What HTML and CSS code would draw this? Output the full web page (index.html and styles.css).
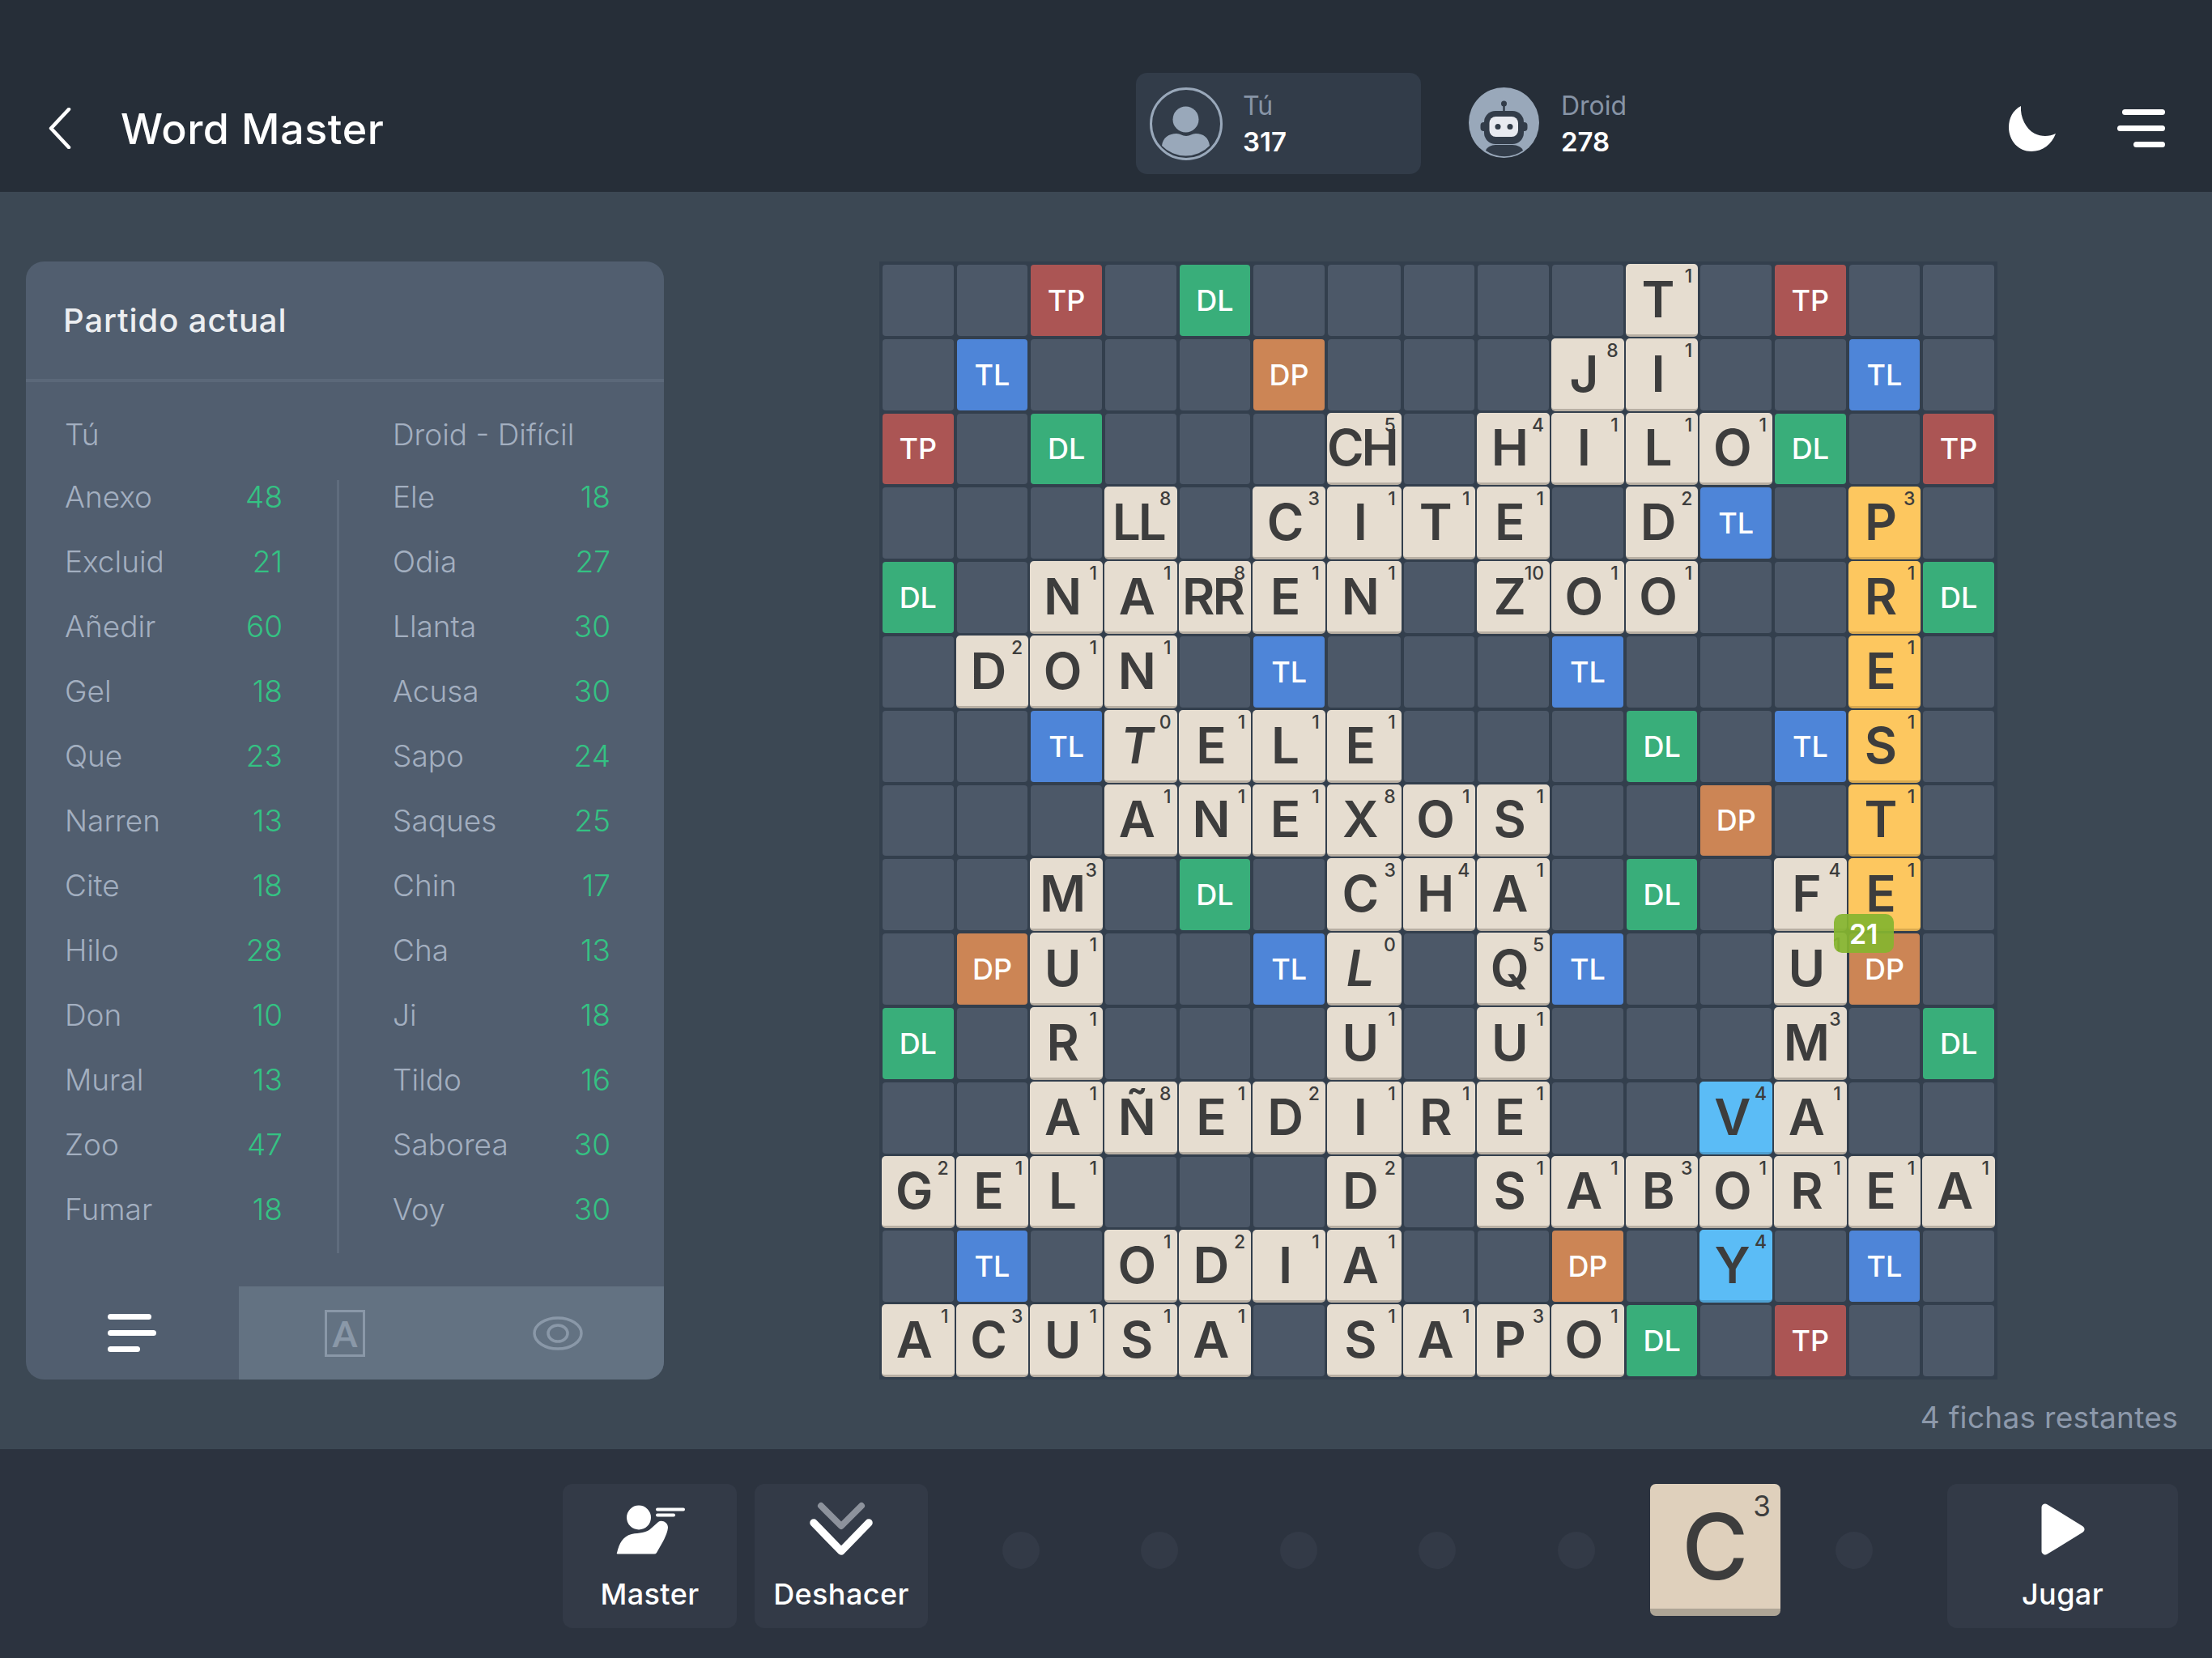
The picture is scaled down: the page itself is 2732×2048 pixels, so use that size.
FILE: index.html
```html
<!DOCTYPE html>
<html lang="es">
<head>
    <meta charset="UTF-8">
    <title>Word Master</title>
    <link rel="stylesheet" href="styles.css">
</head>
<body>
<header class="hdr">
    <svg class="back" width="28" height="51" viewBox="0 0 28 51"><path d="M25 2 L3 25.5 L25 49" fill="none" stroke="#fff" stroke-width="4.5" stroke-linecap="round" stroke-linejoin="round"/></svg>
    <h1 class="title">Word Master</h1>
    <div class="player active">
        <svg width="90" height="90" viewBox="0 0 90 90">
            <circle cx="45" cy="45" r="43.5" fill="none" stroke="#99a8ba" stroke-width="3"/>
            <circle cx="44.5" cy="39.5" r="16" fill="#99a8ba"/>
            <path d="M15 72 C16 62 24 57 33 57 C38 57 40 60 45 60 C50 60 52 57 57 57 C66 57 73 62 74 72 A41 41 0 0 1 15 72Z" fill="#99a8ba"/>
        </svg>
        <div class="who"><span class="name">Tú</span><span class="pts">317</span></div>
    </div>
    <div class="player droid">
        <svg width="87" height="90" viewBox="0 0 87 90">
            <circle cx="43.5" cy="43.5" r="43.5" fill="#99a8ba"/>
            <path d="M43.5 20 V30" stroke="#323c49" stroke-width="2.5"/>
            <circle cx="43.5" cy="20" r="3.5" fill="#323c49"/>
            <rect x="14.5" y="43" width="58" height="11" rx="4" fill="#323c49"/>
            <rect x="19" y="29" width="49" height="41" rx="14" fill="#323c49"/>
            <rect x="25.5" y="36" width="35.5" height="25" rx="8" fill="#e8eaf0"/>
            <circle cx="36" cy="48.5" r="3.5" fill="#323c49"/>
            <circle cx="51" cy="48.5" r="3.5" fill="#323c49"/>
            <path d="M21 78 C22 74 28 71 33 71 H54 C60 71 66 74 67 78 A40 40 0 0 1 21 78Z" fill="#323c49"/>
        </svg>
        <div class="who"><span class="name">Droid</span><span class="pts">278</span></div>
    </div>
    <svg class="moon" width="58" height="57" viewBox="0 0 58 57"><path d="M15 1 C5 6 0 16 0 27 C0 44 12 57 28 57 C42 57 53 48 58 35 C50 39 40 39 32 35 C21 29 14 15 15 1Z" fill="#fff"/></svg>
    <div class="menu"><i class="m1"></i><i class="m2"></i><i class="m3"></i></div>
</header>

<main class="main">
    <div class="top">
        <section class="panel">
            <h2 class="panel-title">Partido actual</h2>
            <div class="heads"><span class="head-l">Tú</span><span>Droid - Difícil</span></div>
            <div class="lists">
                <div class="col left">
                    <div class="row"><span>Anexo</span><em>48</em></div>
                    <div class="row"><span>Excluid</span><em>21</em></div>
                    <div class="row"><span>Añedir</span><em>60</em></div>
                    <div class="row"><span>Gel</span><em>18</em></div>
                    <div class="row"><span>Que</span><em>23</em></div>
                    <div class="row"><span>Narren</span><em>13</em></div>
                    <div class="row"><span>Cite</span><em>18</em></div>
                    <div class="row"><span>Hilo</span><em>28</em></div>
                    <div class="row"><span>Don</span><em>10</em></div>
                    <div class="row"><span>Mural</span><em>13</em></div>
                    <div class="row"><span>Zoo</span><em>47</em></div>
                    <div class="row"><span>Fumar</span><em>18</em></div>
                </div>
                <div class="col right">
                    <div class="row"><span>Ele</span><em>18</em></div>
                    <div class="row"><span>Odia</span><em>27</em></div>
                    <div class="row"><span>Llanta</span><em>30</em></div>
                    <div class="row"><span>Acusa</span><em>30</em></div>
                    <div class="row"><span>Sapo</span><em>24</em></div>
                    <div class="row"><span>Saques</span><em>25</em></div>
                    <div class="row"><span>Chin</span><em>17</em></div>
                    <div class="row"><span>Cha</span><em>13</em></div>
                    <div class="row"><span>Ji</span><em>18</em></div>
                    <div class="row"><span>Tildo</span><em>16</em></div>
                    <div class="row"><span>Saborea</span><em>30</em></div>
                    <div class="row"><span>Voy</span><em>30</em></div>
                </div>
            </div>
            <div class="tabs">
                <div class="tab on"><div class="bars"><i class="b1"></i><i class="b2"></i><i class="b3"></i></div></div>
                <div class="tab"><div class="letterbox">A</div></div>
                <div class="tab">
                    <svg width="62" height="42" viewBox="0 0 62 42"><ellipse cx="31" cy="21" rx="29" ry="19" fill="none" stroke="#8a98a8" stroke-width="3.5"/><ellipse cx="31" cy="21" rx="12" ry="10" fill="none" stroke="#8a98a8" stroke-width="3.5"/></svg>
                </div>
            </div>
        </section>

        <section class="board">
            <!-- 0 -->
            <div class="c"></div><div class="c"></div><div class="c tp">TP</div><div class="c"></div><div class="c dl">DL</div><div class="c"></div><div class="c"></div><div class="c"></div><div class="c"></div><div class="c"></div><div class="t">T<b>1</b></div><div class="c"></div><div class="c tp">TP</div><div class="c"></div><div class="c"></div>
            <!-- 1 -->
            <div class="c"></div><div class="c tl">TL</div><div class="c"></div><div class="c"></div><div class="c"></div><div class="c dp">DP</div><div class="c"></div><div class="c"></div><div class="c"></div><div class="t">J<b>8</b></div><div class="t">I<b>1</b></div><div class="c"></div><div class="c"></div><div class="c tl">TL</div><div class="c"></div>
            <!-- 2 -->
            <div class="c tp">TP</div><div class="c"></div><div class="c dl">DL</div><div class="c"></div><div class="c"></div><div class="c"></div><div class="t dg">CH<b>5</b></div><div class="c"></div><div class="t">H<b>4</b></div><div class="t">I<b>1</b></div><div class="t">L<b>1</b></div><div class="t">O<b>1</b></div><div class="c dl">DL</div><div class="c"></div><div class="c tp">TP</div>
            <!-- 3 -->
            <div class="c"></div><div class="c"></div><div class="c"></div><div class="t dg">LL<b>8</b></div><div class="c"></div><div class="t">C<b>3</b></div><div class="t">I<b>1</b></div><div class="t">T<b>1</b></div><div class="t">E<b>1</b></div><div class="c"></div><div class="t">D<b>2</b></div><div class="c tl">TL</div><div class="c"></div><div class="t y">P<b>3</b></div><div class="c"></div>
            <!-- 4 -->
            <div class="c dl">DL</div><div class="c"></div><div class="t">N<b>1</b></div><div class="t">A<b>1</b></div><div class="t dg">RR<b>8</b></div><div class="t">E<b>1</b></div><div class="t">N<b>1</b></div><div class="c"></div><div class="t">Z<b>10</b></div><div class="t">O<b>1</b></div><div class="t">O<b>1</b></div><div class="c"></div><div class="c"></div><div class="t y">R<b>1</b></div><div class="c dl">DL</div>
            <!-- 5 -->
            <div class="c"></div><div class="t">D<b>2</b></div><div class="t">O<b>1</b></div><div class="t">N<b>1</b></div><div class="c"></div><div class="c tl">TL</div><div class="c"></div><div class="c"></div><div class="c"></div><div class="c tl">TL</div><div class="c"></div><div class="c"></div><div class="c"></div><div class="t y">E<b>1</b></div><div class="c"></div>
            <!-- 6 -->
            <div class="c"></div><div class="c"></div><div class="c tl">TL</div><div class="t blank">T<b>0</b></div><div class="t">E<b>1</b></div><div class="t">L<b>1</b></div><div class="t">E<b>1</b></div><div class="c"></div><div class="c"></div><div class="c"></div><div class="c dl">DL</div><div class="c"></div><div class="c tl">TL</div><div class="t y">S<b>1</b></div><div class="c"></div>
            <!-- 7 -->
            <div class="c"></div><div class="c"></div><div class="c"></div><div class="t">A<b>1</b></div><div class="t">N<b>1</b></div><div class="t">E<b>1</b></div><div class="t">X<b>8</b></div><div class="t">O<b>1</b></div><div class="t">S<b>1</b></div><div class="c"></div><div class="c"></div><div class="c dp">DP</div><div class="c"></div><div class="t y">T<b>1</b></div><div class="c"></div>
            <!-- 8 -->
            <div class="c"></div><div class="c"></div><div class="t">M<b>3</b></div><div class="c"></div><div class="c dl">DL</div><div class="c"></div><div class="t">C<b>3</b></div><div class="t">H<b>4</b></div><div class="t">A<b>1</b></div><div class="c"></div><div class="c dl">DL</div><div class="c"></div><div class="t">F<b>4</b></div><div class="t y">E<b>1</b><span class="bubble">21</span></div><div class="c"></div>
            <!-- 9 -->
            <div class="c"></div><div class="c dp">DP</div><div class="t">U<b>1</b></div><div class="c"></div><div class="c"></div><div class="c tl">TL</div><div class="t blank">L<b>0</b></div><div class="c"></div><div class="t">Q<b>5</b></div><div class="c tl">TL</div><div class="c"></div><div class="c"></div><div class="t">U<b>1</b></div><div class="c dp">DP</div><div class="c"></div>
            <!-- 10 -->
            <div class="c dl">DL</div><div class="c"></div><div class="t">R<b>1</b></div><div class="c"></div><div class="c"></div><div class="c"></div><div class="t">U<b>1</b></div><div class="c"></div><div class="t">U<b>1</b></div><div class="c"></div><div class="c"></div><div class="c"></div><div class="t">M<b>3</b></div><div class="c"></div><div class="c dl">DL</div>
            <!-- 11 -->
            <div class="c"></div><div class="c"></div><div class="t">A<b>1</b></div><div class="t">Ñ<b>8</b></div><div class="t">E<b>1</b></div><div class="t">D<b>2</b></div><div class="t">I<b>1</b></div><div class="t">R<b>1</b></div><div class="t">E<b>1</b></div><div class="c"></div><div class="c"></div><div class="t sky">V<b>4</b></div><div class="t">A<b>1</b></div><div class="c"></div><div class="c"></div>
            <!-- 12 -->
            <div class="t">G<b>2</b></div><div class="t">E<b>1</b></div><div class="t">L<b>1</b></div><div class="c"></div><div class="c"></div><div class="c"></div><div class="t">D<b>2</b></div><div class="c"></div><div class="t">S<b>1</b></div><div class="t">A<b>1</b></div><div class="t">B<b>3</b></div><div class="t">O<b>1</b></div><div class="t">R<b>1</b></div><div class="t">E<b>1</b></div><div class="t">A<b>1</b></div>
            <!-- 13 -->
            <div class="c"></div><div class="c tl">TL</div><div class="c"></div><div class="t">O<b>1</b></div><div class="t">D<b>2</b></div><div class="t">I<b>1</b></div><div class="t">A<b>1</b></div><div class="c"></div><div class="c"></div><div class="c dp">DP</div><div class="c"></div><div class="t sky">Y<b>4</b></div><div class="c"></div><div class="c tl">TL</div><div class="c"></div>
            <!-- 14 -->
            <div class="t">A<b>1</b></div><div class="t">C<b>3</b></div><div class="t">U<b>1</b></div><div class="t">S<b>1</b></div><div class="t">A<b>1</b></div><div class="c"></div><div class="t">S<b>1</b></div><div class="t">A<b>1</b></div><div class="t">P<b>3</b></div><div class="t">O<b>1</b></div><div class="c dl">DL</div><div class="c"></div><div class="c tp">TP</div><div class="c"></div><div class="c"></div>
        </section>
    </div>
    <p class="left-count">4 fichas restantes</p>
</main>

<footer class="ftr">
    <button class="btn master" type="button">
        <span class="ico">
            <svg width="86" height="66" viewBox="0 0 86 66">
                <circle cx="29" cy="18.5" r="15" fill="#fff"/>
                <path d="M2 62 C5 50 9 42 20 39 C30 37 38 38 44 32 L53 24 C57 21 65 24 65 31 C64 40 58 50 51 62 Q50 63.5 48 63.5 H3 Q1 63.5 2 62Z" fill="#fff"/>
                <path d="M52 8.5 H84 M52 15.5 H72" stroke="#fff" stroke-width="4" stroke-linecap="round"/>
            </svg>
        </span>
        <span>Master</span>
    </button>
    <button class="btn undo" type="button">
        <span class="ico">
            <svg width="80" height="72" viewBox="0 0 80 72">
                <path d="M15 7 L40 32 L65 7" fill="none" stroke="#8d929c" stroke-width="8" stroke-linecap="round" stroke-linejoin="round"/>
                <path d="M6 28 L40 63 L74 28" fill="none" stroke="#fff" stroke-width="9.5" stroke-linecap="round" stroke-linejoin="round"/>
            </svg>
        </span>
        <span>Deshacer</span>
    </button>
    <div class="rack">
        <div class="slot"><i class="dot"></i></div>
        <div class="slot"><i class="dot"></i></div>
        <div class="slot"><i class="dot"></i></div>
        <div class="slot"><i class="dot"></i></div>
        <div class="slot"><i class="dot"></i></div>
        <div class="slot"><div class="rack-tile">C<b>3</b></div></div>
        <div class="slot"><i class="dot"></i></div>
    </div>
    <button class="btn play" type="button">
        <span class="ico">
            <svg width="56" height="66" viewBox="0 0 56 66"><path d="M6 6 L50 33 L6 60Z" fill="#fff" stroke="#fff" stroke-width="9" stroke-linejoin="round"/></svg>
        </span>
        <span>Jugar</span>
    </button>
</footer>
</body>
</html>
```

FILE: styles.css
```css
* { box-sizing: border-box; }
html, body { margin: 0; padding: 0; }
body { width: 2732px; height: 2048px; display: flex; flex-direction: column; font-family: "Inter", "Noto Sans", sans-serif; background: #3c4854; overflow: hidden; }

/* header */
.hdr { height: 237px; flex: none; background: #262e38; display: flex; align-items: flex-start; padding: 90px 58px 0 60px; }
.back { margin-top: 43px; flex: none; }
.title { width: 1315px; margin: 40px 0 0 0; padding-left: 61px; font-size: 52px; line-height: 60px; font-weight: 500; letter-spacing: .6px; color: #fff; }
.player { width: 352px; height: 125px; padding-left: 17px; display: flex; align-items: center; gap: 25px; border-radius: 14px; flex: none; }
.player.active { background: #323c49; }
.player.droid { margin-left: 42px; gap: 27px; }
.who { display: flex; flex-direction: column; }
.name { font-size: 32px; line-height: 44px; color: #8794a6; }
.pts { font-size: 33px; line-height: 44px; color: #fff; font-weight: 600; }
.moon { margin: 40px 0 0 auto; flex: none; }
.menu { width: 59px; margin: 45px 0 0 76px; display: flex; flex-direction: column; align-items: flex-end; gap: 13px; }
.menu i { display: block; height: 7px; background: #fff; border-radius: 4px; }
.m1 { width: 53px; }
.m2 { width: 59px; }
.m3 { width: 39px; }

/* main */
.main { flex: 1; padding: 86px 0 0 32px; position: relative; }
.top { display: flex; gap: 266px; }
.left-count { margin: 25px 42px 0 0; text-align: right; font-size: 37px; line-height: 44px; letter-spacing: .3px; color: #8d99ab; }

/* panel */
.panel { width: 788px; height: 1381px; background: #515e6f; border-radius: 22px; overflow: hidden; display: flex; flex-direction: column; }
.panel-title { height: 149px; margin: 0; padding: 49px 0 0 46px; font-size: 40px; line-height: 48px; font-weight: 500; letter-spacing: .9px; color: #eceef1; border-bottom: 4px solid #5b6879; }
.heads { display: flex; padding: 44px 0 0 48px; font-size: 37px; line-height: 42px; font-weight: 300; color: #a3afc0; }
.head-l { width: 405px; }
.lists { display: flex; margin: 35px 0 0 48px; }
.col { display: flex; flex-direction: column; gap: 38px; padding-bottom: 33px; }
.col.left { width: 269px; }
.col.right { width: 338px; margin-left: 67px; padding-left: 66px; border-left: 3px solid #5f6c7d; }
.row { height: 42px; display: flex; justify-content: space-between; font-size: 37px; line-height: 42px; font-weight: 300; color: #a3afc0; }
.row em { font-style: normal; color: #34c283; }
.tabs { margin-top: auto; height: 115px; display: flex; }
.tab { flex: 1; display: flex; align-items: center; justify-content: center; background: #637282; }
.tab.on { background: transparent; }
.bars { width: 60px; display: flex; flex-direction: column; gap: 13px; }
.bars i { display: block; height: 7px; background: #fff; border-radius: 4px; }
.b1 { width: 54px; }
.b2 { width: 60px; }
.b3 { width: 40px; }
.letterbox { width: 50px; height: 58px; border: 3px solid #8a98a8; display: flex; align-items: center; justify-content: center; font-family: "Lato", sans-serif; font-size: 44px; font-weight: 700; color: #8a98a8; }

/* board */
.board { width: 1381px; height: 1381px; padding: 4px; background: #333f4d; display: grid; grid-template-columns: repeat(15, 1fr); grid-template-rows: repeat(15, 1fr); gap: 4px; }
.c { background: #4c5868; border-radius: 4px; display: flex; align-items: center; justify-content: center; font-size: 36px; font-weight: 500; color: #fff; }
.tp { background: #ab5554; }
.dl { background: #39ae7a; }
.tl { background: #4e85d8; }
.dp { background: #cc8555; }
.t { position: relative; margin: -1px; padding-right: 9px; display: flex; align-items: center; justify-content: center; background: #e6ddd0; border-bottom: 3px solid #b8afa3; border-radius: 5px; font-size: 62px; font-weight: 600; color: #3d3d3d; white-space: nowrap; }
.t b { position: absolute; top: 2px; right: 7px; font-size: 23px; line-height: 26px; font-weight: 500; }
.t.y { background: #fdc75f; border-bottom-color: #d9a94f; }
.t.sky { background: #5bbcf6; border-bottom-color: #4ea0d2; }
.t.dg { padding-right: 6px; letter-spacing: -3px; }
.t.dg b { letter-spacing: 0; }
.blank { font-style: italic; }
.blank b { font-style: normal; }
.bubble { position: absolute; left: -18px; top: 69px; z-index: 2; width: 74px; height: 48px; display: flex; align-items: center; justify-content: center; background: rgba(133, 181, 47, .93); border-radius: 10px; font-size: 34px; font-weight: 600; font-style: normal; letter-spacing: 0; color: #fff; }

/* footer */
.ftr { height: 258px; flex: none; background: #2c333f; display: flex; align-items: flex-start; padding: 43px 42px 0 695px; }
.btn { height: 178px; border: none; border-radius: 12px; background: #333a47; color: #fff; font-family: inherit; font-size: 36px; line-height: 44px; font-weight: 500; letter-spacing: .4px; display: flex; flex-direction: column; align-items: center; padding: 20px 0 0 0; flex: none; }
.ico { height: 72px; margin-bottom: 22px; display: flex; align-items: center; justify-content: center; }
.master { width: 215px; }
.undo { width: 214px; margin-left: 22px; }
.play { width: 285px; margin-left: 29px; }
.rack { margin-left: 29px; width: 1201px; height: 163px; display: flex; }
.slot { width: 171.5px; flex: none; display: flex; align-items: center; justify-content: center; }
.dot { display: block; width: 46px; height: 46px; border-radius: 50%; background: #333a47; }
.rack-tile { position: relative; width: 161px; flex: none; height: 163px; display: flex; align-items: center; justify-content: center; background: #dfd0bc; border-bottom: 9px solid #aea596; border-radius: 7px; font-size: 112px; font-weight: 500; color: #3d3d3d; }
.rack-tile b { position: absolute; top: 6px; right: 12px; font-size: 35px; line-height: 42px; font-weight: 400; }
```
